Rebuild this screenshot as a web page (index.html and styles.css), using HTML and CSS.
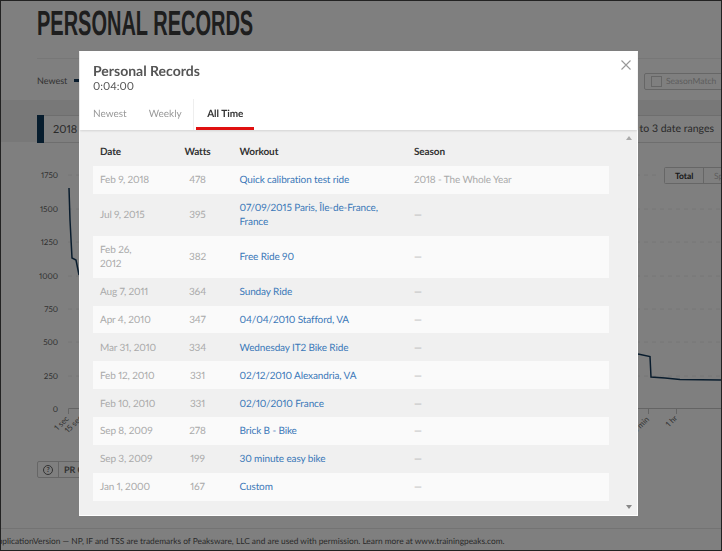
FILE: index.html
```html
<!DOCTYPE html>
<html lang="en">

<head>
    <meta charset="utf-8">
    <meta name="viewport" content="width=device-width, initial-scale=1.0">
    <title>Personal Records</title>
    <link rel="stylesheet" href="styles.css">
</head>

<body>

    <div class="page">
        <h1 class="pageTitle"><span>PERSONAL RECORDS</span></h1>

        <div class="filterRow">
            <div class="filterLeft">
                <span class="filterLabel">Newest</span>
                <span class="filterDash"></span>
            </div>
            <div class="seasonMatch"><span class="checkbox"></span>SeasonMatch</div>
        </div>

        <div class="rangeRow">
            <div class="rangeBox">
                <span class="rangeMark"></span>
                <span class="rangeYear">2018</span>
                <span class="rangeHint">to 3 date ranges</span>
            </div>
        </div>

        <svg class="chart" width="722" height="290" viewBox="0 0 722 290">
            <g class="grid">
                <line x1="68" y1="14" x2="660" y2="14"></line>
                <line x1="68" y1="48" x2="722" y2="48"></line>
                <line x1="68" y1="81" x2="722" y2="81"></line>
                <line x1="68" y1="115" x2="722" y2="115"></line>
                <line x1="68" y1="148" x2="722" y2="148"></line>
                <line x1="68" y1="181" x2="722" y2="181"></line>
                <line x1="68" y1="215" x2="722" y2="215"></line>
            </g>
            <g class="yLabels">
                <text x="58" y="17">1750</text>
                <text x="58" y="51">1500</text>
                <text x="58" y="84">1250</text>
                <text x="58" y="118">1000</text>
                <text x="58" y="151">750</text>
                <text x="58" y="184">500</text>
                <text x="58" y="218">250</text>
                <text x="58" y="251">0</text>
            </g>
            <path class="axis" d="M68.500 253V247.500H722M648.500 247.500V253M676.500 247.500V253"></path>
            <path class="curve" d="M69 27L70 59L72 97L76 99L77 104L79 114M638 193L650 195.500L651 216L665 217L680 218.500L722 219"></path>
            <g class="xLabels">
                <text transform="translate(57.500 270) rotate(-45)">1 sec</text>
                <text transform="translate(68 272.500) rotate(-45)">15 sec</text>
                <text transform="translate(636 272.500) rotate(-45)">5 min</text>
                <text transform="translate(669 266.500) rotate(-45)">1 hr</text>
            </g>
            <g class="segment">
                <rect x="664.500" y="6.500" width="70" height="16" rx="1"></rect>
                <line x1="703.500" y1="6.500" x2="703.500" y2="22.500"></line>
                <text class="segmentOn" x="675" y="18">Total</text>
                <text x="714" y="18">Sp</text>
            </g>
        </svg>

        <div class="helpRow">
            <span class="helpIcon">?</span>
            <span class="helpText">PR Chart</span>
        </div>

        <footer class="pageFooter">ApplicationVersion — NP, IF and TSS are trademarks of Peaksware, LLC and are used with permission. Learn more at www.trainingpeaks.com.</footer>
    </div>

    <div class="overlay">
        <section class="modal">
            <header class="modalHead">
                <svg class="close" width="10" height="10" viewBox="0 0 10 10">
                    <path d="M0.500 0.500L9.500 9.500M9.500 0.500L0.500 9.500"></path>
                </svg>
                <h2 class="modalTitle">Personal Records</h2>
                <div class="modalTime">0:04:00</div>
                <nav class="tabs">
                    <a class="tab">Newest</a>
                    <a class="tab">Weekly</a>
                    <a class="tab tabActive">All Time</a>
                </nav>
            </header>

            <div class="modalBody">
                <table class="records">
                    <thead>
                        <tr>
                            <th class="colDate">Date</th>
                            <th class="colWatts">Watts</th>
                            <th class="colWorkout">Workout</th>
                            <th class="colSeason">Season</th>
                        </tr>
                    </thead>
                    <tbody>
                        <tr>
                            <td>Feb 9, 2018</td>
                            <td class="colWatts">478</td>
                            <td class="colWorkout"><a>Quick calibration test ride</a></td>
                            <td>2018 - The Whole Year</td>
                        </tr>
                        <tr>
                            <td>Jul 9, 2015</td>
                            <td class="colWatts">395</td>
                            <td class="colWorkout"><a>07/09/2015 Paris, Île-de-France,<br>France</a></td>
                            <td>—</td>
                        </tr>
                        <tr>
                            <td>Feb 26,<br>2012</td>
                            <td class="colWatts">382</td>
                            <td class="colWorkout"><a>Free Ride 90</a></td>
                            <td>—</td>
                        </tr>
                        <tr>
                            <td>Aug 7, 2011</td>
                            <td class="colWatts">364</td>
                            <td class="colWorkout"><a>Sunday Ride</a></td>
                            <td>—</td>
                        </tr>
                        <tr>
                            <td>Apr 4, 2010</td>
                            <td class="colWatts">347</td>
                            <td class="colWorkout"><a>04/04/2010 Stafford, VA</a></td>
                            <td>—</td>
                        </tr>
                        <tr>
                            <td>Mar 31, 2010</td>
                            <td class="colWatts">334</td>
                            <td class="colWorkout"><a>Wednesday IT2 Bike Ride</a></td>
                            <td>—</td>
                        </tr>
                        <tr>
                            <td>Feb 12, 2010</td>
                            <td class="colWatts">331</td>
                            <td class="colWorkout"><a>02/12/2010 Alexandria, VA</a></td>
                            <td>—</td>
                        </tr>
                        <tr>
                            <td>Feb 10, 2010</td>
                            <td class="colWatts">331</td>
                            <td class="colWorkout"><a>02/10/2010 France</a></td>
                            <td>—</td>
                        </tr>
                        <tr>
                            <td>Sep 8, 2009</td>
                            <td class="colWatts">278</td>
                            <td class="colWorkout"><a>Brick B - Bike</a></td>
                            <td>—</td>
                        </tr>
                        <tr>
                            <td>Sep 3, 2009</td>
                            <td class="colWatts">199</td>
                            <td class="colWorkout"><a>30 minute easy bike</a></td>
                            <td>—</td>
                        </tr>
                        <tr>
                            <td>Jan 1, 2000</td>
                            <td class="colWatts">167</td>
                            <td class="colWorkout"><a>Custom</a></td>
                            <td>—</td>
                        </tr>
                    </tbody>
                </table>

                <div class="scrollArrows">
                    <span class="arrowUp"></span>
                    <span class="arrowDown"></span>
                </div>
            </div>
        </section>
    </div>

</body>

</html>
```

FILE: styles.css
```css
html,
body {
    margin: 0;
    height: 100%;
}

body {
    width: 722px;
    height: 551px;
    overflow: hidden;
    background-color: #fff;
    font-family: 'Lato', sans-serif;
    font-variant-numeric: proportional-nums;
    text-rendering: geometricPrecision;
    color: #444;
}

/* page behind the modal */
.page {
    height: 551px;
    display: flex;
    flex-direction: column;
    overflow: hidden;
}

.pageTitle {
    margin: 9px 0 0 37px;
    height: 49px;
    border-bottom: 1px solid #eee;
    font-family: 'Liberation Sans', sans-serif;
    font-size: 35px;
    line-height: 30px;
    font-weight: 700;
    color: #3d3d3d;
}

.pageTitle span {
    display: inline-block;
    transform: scaleX(0.571);
    transform-origin: left center;
    white-space: nowrap;
}

.filterRow {
    height: 41px;
    padding-left: 37px;
    display: flex;
    align-items: center;
    justify-content: space-between;
}

.filterLeft {
    display: flex;
    align-items: center;
    gap: 7px;
    margin-top: 2px;
}

.filterLabel {
    font-size: 9px;
    color: #666;
}

.filterDash {
    width: 10px;
    height: 3px;
    background-color: #12395b;
}

.seasonMatch {
    width: 90px;
    height: 15px;
    margin-right: -14px;
    margin-top: 3px;
    border: 1px solid #ccc;
    border-radius: 2px;
    display: flex;
    align-items: center;
    font-size: 8.500px;
    color: #bbb;
    white-space: nowrap;
}

.checkbox {
    width: 9px;
    height: 9px;
    margin: 0 4px 0 6px;
    border: 1px solid #ccc;
}

.rangeRow {
    height: 42px;
    padding: 15px 0 0 37px;
    box-sizing: border-box;
    background-color: #f0f0f0;
}

.rangeBox {
    height: 28px;
    display: flex;
    align-items: center;
    background-color: #fff;
    border-top: 1px solid #ddd;
    border-bottom: 1px solid #ddd;
    box-sizing: border-box;
}

.rangeMark {
    width: 7px;
    height: 28px;
    background-color: #0e3a5c;
}

.rangeYear {
    margin-left: 9px;
    font-size: 11px;
    color: #555;
}

.rangeHint {
    margin-left: auto;
    margin-right: 8px;
    font-size: 10.500px;
    color: #555;
}

.chart {
    display: block;
    margin-top: 19px;
    flex: none;
}

.chart text {
    font-family: 'Lato', sans-serif;
    font-size: 8px;
    fill: #666;
}

.grid line {
    stroke: #ececec;
    stroke-dasharray: 4 4;
}

.yLabels text {
    text-anchor: end;
}

.axis {
    fill: none;
    stroke: #c8c8c8;
}

.curve {
    fill: none;
    stroke: #12395b;
    stroke-width: 1.500;
}

.segment rect,
.segment line {
    fill: #fff;
    stroke: #ccc;
}

.chart .segment text {
    font-size: 8.500px;
    fill: #bbb;
}

.chart .segment .segmentOn {
    fill: #333;
    font-weight: 700;
}

.helpRow {
    width: 120px;
    height: 15px;
    margin: 10px 0 0 37px;
    display: flex;
    align-items: center;
    flex: none;
    border: 1px solid #ccc;
    border-radius: 2px;
    font-size: 9px;
    font-weight: 700;
    color: #666;
}

.helpIcon {
    width: 8px;
    height: 8px;
    margin: 0 5px;
    border: 1px solid #666;
    border-radius: 50%;
    font-size: 7px;
    line-height: 8px;
    text-align: center;
}

.helpText {
    padding-left: 5px;
    border-left: 1px solid #ccc;
    line-height: 15px;
}

.pageFooter {
    margin-top: 50px;
    padding-top: 6px;
    border-top: 1px solid #e6e6e6;
    text-indent: -8px;
    font-size: 8.350px;
    line-height: 12px;
    color: #555;
    white-space: nowrap;
}

/* modal */
.overlay {
    position: fixed;
    top: 0;
    left: 0;
    width: 722px;
    height: 551px;
    box-sizing: border-box;
    padding: 51px 0 0 79px;
    background-color: rgba(0, 0, 0, 0.5);
    box-shadow: inset 0 0 0 1px #222;
}

.modal {
    width: 559px;
    height: 465px;
    display: flex;
    flex-direction: column;
    box-sizing: border-box;
    border-right: 1px solid #fff;
    border-bottom: 1px solid #fff;
    border-left: 1px solid #f4f4f4;
    background-color: #f0f0f0;
}

.modalHead {
    position: relative;
    height: 79px;
    flex: none;
    box-sizing: border-box;
    padding: 11px 0 0 13px;
    background-color: #fff;
    box-shadow: 0 1px 2px rgba(0, 0, 0, 0.12);
}

.close {
    position: absolute;
    top: 9px;
    right: 6px;
}

.close path {
    fill: none;
    stroke: #999;
    stroke-width: 1.100;
}

.modalTitle {
    margin: 0;
    font-size: 14px;
    line-height: 17px;
    font-weight: 700;
    color: #555;
}

.modalTime {
    margin-top: 1px;
    font-size: 11px;
    line-height: 13px;
    color: #555;
}

.tabs {
    display: flex;
    margin-top: 6px;
    height: 31px;
}

.tab {
    margin-right: 22px;
    font-size: 10px;
    line-height: 30px;
    color: #999;
}

.tab:nth-child(2) {
    margin-right: 11.500px;
}

.tabActive {
    position: relative;
    margin-right: 0;
    padding: 0 11px 0 14px;
    font-weight: 700;
    color: #333;
}

.tabActive::before {
    content: "";
    position: absolute;
    top: 0;
    bottom: 0;
    left: 0;
    border-left: 1px solid #eee;
}

.tabActive::after {
    content: "";
    position: absolute;
    left: 3px;
    right: 0;
    bottom: 0;
    height: 3px;
    background-color: #e01010;
}

.modalBody {
    flex: 1;
    display: flex;
    align-items: flex-start;
    justify-content: space-between;
    padding-left: 13px;
    min-height: 0;
}

.records {
    width: 516px;
    margin-top: 7px;
    border-collapse: collapse;
    table-layout: fixed;
    font-size: 10px;
    letter-spacing: -0.120px;
    line-height: 14px;
    color: #aaa;
}

.records th {
    height: 29px;
    padding: 0 7px;
    box-sizing: border-box;
    text-align: left;
    font-weight: 700;
    color: #333;
}

.records td {
    padding: 7.350px 7px 6.550px;
    white-space: nowrap;
}

.records tbody tr:nth-child(odd) {
    background-color: #fafafa;
}

.records a {
    color: #3a78b8;
}

.records .colDate {
    width: 84px;
}

.records .colWatts {
    width: 41px;
    padding-left: 0;
    padding-right: 0;
    text-align: center;
}

.records .colWorkout {
    width: 189px;
    padding-left: 21.500px;
}

.scrollArrows {
    width: 10px;
    height: 385px;
    margin-right: 3px;
    padding: 6px 0;
    box-sizing: border-box;
    display: flex;
    flex-direction: column;
    justify-content: space-between;
    align-items: center;
}

.arrowUp,
.arrowDown {
    width: 0;
    height: 0;
    border-left: 3.500px solid transparent;
    border-right: 3.500px solid transparent;
}

.arrowUp {
    border-bottom: 4px solid #aaa;
}

.arrowDown {
    border-top: 4px solid #888;
}
```
